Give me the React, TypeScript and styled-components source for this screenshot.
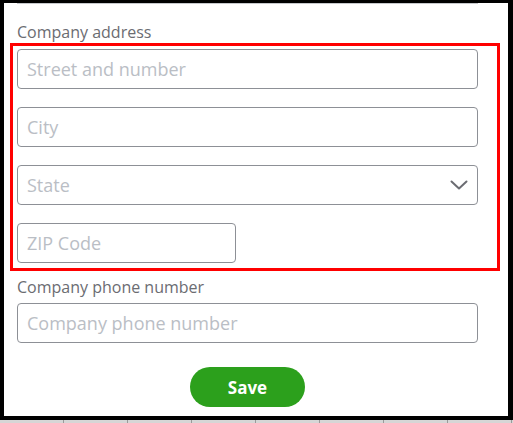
import styled, { createGlobalStyle } from "styled-components";

const GlobalStyle = createGlobalStyle`
  body {
    margin: 0;
    background: #ffffff;
    font-family: "Open Sans", "Liberation Sans", sans-serif;
  }
`;

const App = () => {
  return (
    <>
      <GlobalStyle />
      <Frame>
        <FormColumn>
          <PrevFieldEdge />
          <FieldLabel $top={18}>Company address</FieldLabel>
          <Highlight>
            <TextInput placeholder="Street and number" />
            <TextInput placeholder="City" />
            <SelectBox>
              <Placeholder>State</Placeholder>
              <svg width="18" height="10" viewBox="0 0 18 10" fill="none">
                <path
                  d="M1.5 1.5 L9 8.5 L16.5 1.5"
                  stroke="#6b6c72"
                  strokeWidth="2"
                  strokeLinecap="round"
                  strokeLinejoin="round"
                />
              </svg>
            </SelectBox>
            <TextInput placeholder="ZIP Code" $width={219} />
          </Highlight>
          <FieldLabel $top={6}>Company phone number</FieldLabel>
          <PhoneInput placeholder="Company phone number" />
          <SaveButton type="button">Save</SaveButton>
        </FormColumn>
      </Frame>
      <SheetStrip />
    </>
  );
};

const Frame = styled.div`
  width: 513px;
  height: 420px;
  box-sizing: border-box;
  border: solid #000000;
  border-width: 3px 5px 4px 4px;
  background: #ffffff;
  padding-left: 13px;
  overflow: hidden;
`;

const FormColumn = styled.div`
  width: 461px;
  display: flex;
  flex-direction: column;
  align-items: flex-start;
`;

/* bottom edge of the field above, cut off by the screenshot */
const PrevFieldEdge = styled.div`
  width: 461px;
  height: 1px;
  background: #c6c8cc;
`;

const FieldLabel = styled.label<{ $top: number }>`
  margin-top: ${({ $top }) => $top}px;
  font-size: 16px;
  line-height: 21px;
  color: #6b6c72;
`;

/* red annotation box round the address fields */
const Highlight = styled.div`
  margin-left: -7px;
  width: 490px;
  box-sizing: border-box;
  border: 3px solid #ff0000;
  padding: 3px 19px 5px 4px;
  display: flex;
  flex-direction: column;
  align-items: flex-start;
  gap: 18px;
`;

const TextInput = styled.input<{ $width?: number }>`
  width: ${({ $width }) => ($width ? `${$width}px` : "100%")};
  height: 40px;
  box-sizing: border-box;
  margin: 0;
  padding: 0 9px;
  border: 1px solid #8d9096;
  border-radius: 4px;
  background: #ffffff;
  font-family: inherit;
  font-size: 18px;
  color: #393a3d;
  outline: none;

  &::placeholder {
    color: #babec5;
  }
`;

const PhoneInput = styled(TextInput)`
  margin-top: 5px;
`;

const SelectBox = styled.div`
  width: 100%;
  height: 40px;
  box-sizing: border-box;
  padding: 0 9px 0 9px;
  border: 1px solid #8d9096;
  border-radius: 4px;
  display: flex;
  align-items: center;
  justify-content: space-between;
  cursor: pointer;
`;

const Placeholder = styled.span`
  font-size: 18px;
  color: #babec5;
`;

const SaveButton = styled.button`
  align-self: center;
  margin-top: 24px;
  width: 115px;
  height: 40px;
  border: none;
  border-radius: 20px;
  background: #2ca01c;
  color: #ffffff;
  font-family: inherit;
  font-size: 17px;
  font-weight: 700;
  cursor: pointer;
`;

/* spreadsheet grid peeking out under the window */
const SheetStrip = styled.div`
  width: 513px;
  height: 3px;
  background: repeating-linear-gradient(
    to right,
    #d6d6d6 0px,
    #d6d6d6 63px,
    #9a9a9a 63px,
    #9a9a9a 64px
  );
`;

export default App;
